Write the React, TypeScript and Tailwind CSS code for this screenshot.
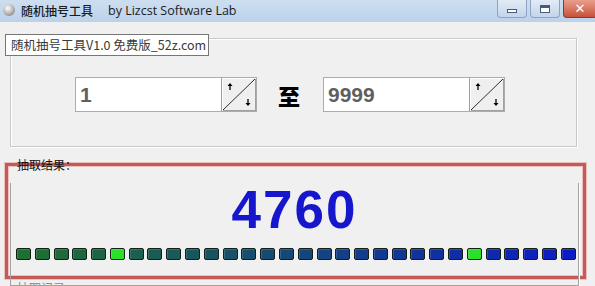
import React from "react";

const CJK = '"Noto Sans CJK SC", "Noto Sans", sans-serif';

function Spinner() {
  return (
    <div className="w-[35px] h-full border-l border-[#9c9c9c] bg-[#efefef] shadow-[inset_1px_1px_0_#ffffff,inset_-1px_-1px_0_#a0a0a0]">
      <svg width="34" height="33" viewBox="0 0 34 33">
        <line x1="1" y1="32" x2="33" y2="1" stroke="#303030" strokeWidth="1" />
        <path d="M8 12 L8 6" stroke="#000" strokeWidth="1.3" />
        <path d="M5.5 8 L8 5 L10.5 8 Z" fill="#000" />
        <path d="M26 21 L26 27" stroke="#000" strokeWidth="1.3" />
        <path d="M23.5 25 L26 28 L28.5 25 Z" fill="#000" />
      </svg>
    </div>
  );
}

function NumInput({ value }: { value: string }) {
  return (
    <div className="w-[182px] h-[35px] flex border border-[#acacac] bg-white">
      <div
        className="flex-1 flex items-center pl-[4px] text-[21px] font-bold text-[#5f5f5f]"
        style={{ fontFamily: '"Liberation Sans", Arial, sans-serif' }}
      >
        {value}
      </div>
      <Spinner />
    </div>
  );
}

function lerp(a: number, b: number, t: number) {
  return Math.round(a + (b - a) * t);
}

export default function App() {
  const squares = Array.from({ length: 30 }, (_, i) => {
    const t = i / 29;
    const c =
      i === 5 || i === 24
        ? "#2be02b"
        : `rgb(${lerp(30, 12, t)},${lerp(112, 28, t)},${lerp(48, 196, t)})`;
    return c;
  });

  return (
    <div
      className="relative w-[595px] h-[286px] overflow-hidden bg-[#f0f0f0]"
      style={{ fontFamily: CJK }}
    >
      {/* Title bar */}
      <div className="h-[22px] flex items-start bg-gradient-to-b from-[#cddef0] to-[#bcd2ea]">
        <div className="w-[12px] h-[12px] mt-[4px] ml-[3px] rounded-full bg-[radial-gradient(circle_at_40%_35%,#ffffff,#9a9a9a_70%,#5a5a5a)]" />
        <div className="ml-[6px] mt-[3px] text-[12px] leading-[16px] font-medium text-[#1c1c1c] whitespace-nowrap">
          随机抽号工具
        </div>
        <div
          className="ml-[15px] mt-[3px] text-[12.5px] leading-[16px] text-[#1c1c1c] whitespace-nowrap"
          style={{ fontFamily: '"Open Sans", "Noto Sans", sans-serif' }}
        >
          by Lizcst Software Lab
        </div>
        <div className="ml-auto mr-[-2px] flex items-start">
          <div className="w-[30px] h-[18px] rounded-b-[4px] border border-t-0 border-[#8ea3c0] bg-gradient-to-b from-[#e2ebf6] to-[#c3d4ea] flex items-end justify-center pb-[4px]">
            <div className="w-[10px] h-[4px] bg-white border border-[#4a5a78]" />
          </div>
          <div className="ml-[3px] w-[30px] h-[18px] rounded-b-[4px] border border-t-0 border-[#8ea3c0] bg-gradient-to-b from-[#e2ebf6] to-[#c3d4ea] flex items-center justify-center">
            <div className="w-[10px] h-[8px] bg-white border border-[#4a5a78] border-t-[3px]" />
          </div>
          <div className="ml-[3px] w-[34px] h-[18px] rounded-b-[4px] border border-t-0 border-[#8a3b30] bg-gradient-to-b from-[#e8a08c] to-[#c6503a] flex items-center justify-center text-white text-[13px] font-bold leading-none" style={{ fontFamily: '"DejaVu Sans", sans-serif' }}>
            ✕
          </div>
        </div>
      </div>

      {/* Top groupbox */}
      <div className="ml-[10px] mt-[16px] w-[567px] h-[109px] border border-[#c9c9c9] shadow-[inset_1px_1px_0_#ffffff,1px_1px_0_#ffffff]">
        <div className="flex items-center ml-[64px] mt-[38px]">
          <NumInput value="1" />
          <div className="ml-[21px] text-[22px] font-black text-black leading-none">至</div>
          <div className="ml-[23px]">
            <NumInput value="9999" />
          </div>
        </div>
      </div>

      {/* Red highlight frame */}
      <div className="relative ml-[5px] mt-[16px] w-[581px] h-[116px] border-[3px] border-[#c25a57] shadow-[0_0_0_1px_#ecc0be,inset_0_0_0_1px_#ecc0be]">
        <div className="ml-[2px] mt-[2px] w-[569px] h-[103px] border border-t-0 border-[#a3a3a3] shadow-[1px_1px_0_#ffffff]">
          <div
            className="mt-[17px] text-center text-[53px] leading-none font-bold text-[#1616cc] tracking-[2px]"
            style={{ fontFamily: '"Liberation Sans", Arial, sans-serif' }}
          >
            4760
          </div>
          <div className="mt-[12px] ml-[5px] w-[560px] flex justify-between">
            {squares.map((c, i) => (
              <div
                key={i}
                className="w-[15px] h-[12px] rounded-[2px] border border-[#142014] shadow-[inset_1px_1px_0_rgba(255,255,255,0.15)]"
                style={{ backgroundColor: c }}
              />
            ))}
          </div>
        </div>
        <div className="absolute left-[9px] top-[-8px] text-[12px] leading-[14px] text-[#111] whitespace-nowrap">
          抽取结果：
        </div>
      </div>

      <div className="ml-[17px] mt-[2px] text-[12px] leading-[14px] text-[#888] whitespace-nowrap">抽取记录：</div>

      {/* Tooltip */}
      <div className="absolute left-[5px] top-[34px] w-[204px] h-[22px] border border-[#767676] bg-white flex items-center pl-[5px] text-[12.5px] text-[#3a3a3a] leading-none whitespace-nowrap">
        随机抽号工具V1.0 免费版_52z.com
      </div>
    </div>
  );
}
